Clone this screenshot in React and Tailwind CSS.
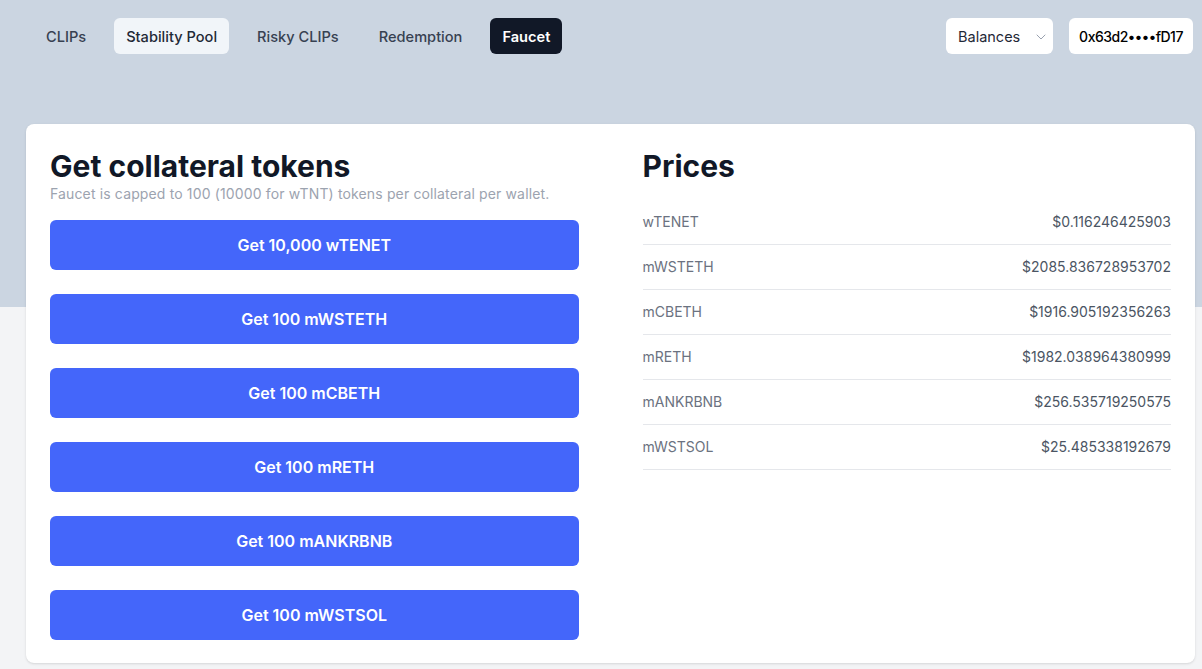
import React from 'react';
import { ChevronDown } from 'lucide-react';

const tabs = ['CLIPs', 'Stability Pool', 'Risky CLIPs', 'Redemption', 'Faucet'];

const faucets = [
  'Get 10,000 wTENET',
  'Get 100 mWSTETH',
  'Get 100 mCBETH',
  'Get 100 mRETH',
  'Get 100 mANKRBNB',
  'Get 100 mWSTSOL',
];

const prices = [
  { token: 'wTENET', price: '$0.116246425903' },
  { token: 'mWSTETH', price: '$2085.836728953702' },
  { token: 'mCBETH', price: '$1916.905192356263' },
  { token: 'mRETH', price: '$1982.038964380999' },
  { token: 'mANKRBNB', price: '$256.535719250575' },
  { token: 'mWSTSOL', price: '$25.485338192679' },
];

const tabClass = (tab) => {
  if (tab === 'Faucet') return 'bg-[#111827] text-white font-semibold';
  if (tab === 'Stability Pool') return 'bg-[#f1f5f9] text-[#1f2937] font-medium';
  return 'text-[#374151] font-medium';
};

const App = () => {
  return (
    <div
      className="min-h-screen bg-[linear-gradient(to_bottom,#cbd5e1_307px,#f3f4f6_307px)] pl-[26px] pr-[7px] pb-[6px]"
      style={{ fontFamily: 'Inter, "Noto Sans", sans-serif' }}
    >
      {/* Top navigation */}
      <div className="flex items-center justify-between pt-[18px] pl-2">
        <div className="flex items-center gap-4">
          {tabs.map((tab) => (
            <button
              key={tab}
              className={`h-9 px-3 pt-px rounded-md text-[14.6px] leading-5 ${tabClass(tab)}`}
            >
              {tab}
            </button>
          ))}
        </div>
        <div className="flex items-center gap-4 pr-[2px]">
          <button className="h-9 w-[107px] pl-3 pr-[4px] pt-px rounded-md bg-white text-[14.5px] text-[#1f2937] flex items-center justify-between">
            <span>Balances</span>
            <ChevronDown className="h-4 w-4 text-gray-400" strokeWidth={1.5} />
          </button>
          <button className="h-9 w-[124px] pt-px rounded-md bg-white text-[14px] font-medium text-black tracking-[-0.5px]">
            0x63d2••••fD17
          </button>
        </div>
      </div>

      {/* Main card */}
      <div className="mt-[70px] bg-white rounded-lg shadow-sm px-6 pt-6 pb-[23px] grid grid-cols-2 gap-16">
        <div>
          <h1 className="text-[30px] leading-9 font-bold text-[#111827]">Get collateral tokens</h1>
          <p className="text-[14px] leading-5 text-[#9ca3af] tracking-[0.14px]">
            Faucet is capped to 100 (10000 for wTNT) tokens per collateral per wallet.
          </p>
          <div className="mt-4 flex flex-col gap-6">
            {faucets.map((label) => (
              <button
                key={label}
                className="h-[50px] w-full rounded-md bg-[#4466fa] text-white text-[16px] font-semibold"
              >
                {label}
              </button>
            ))}
          </div>
        </div>

        <div>
          <h2 className="text-[30px] leading-9 font-bold text-[#111827]">Prices</h2>
          <div className="mt-4">
            {prices.map((p) => (
              <div
                key={p.token}
                className="flex items-center justify-between py-3 border-b border-gray-200 text-[14px] leading-5"
              >
                <span className="text-[#6b7280]">{p.token}</span>
                <span className="text-[#4b5563]">{p.price}</span>
              </div>
            ))}
          </div>
        </div>
      </div>
    </div>
  );
};

export default App;
